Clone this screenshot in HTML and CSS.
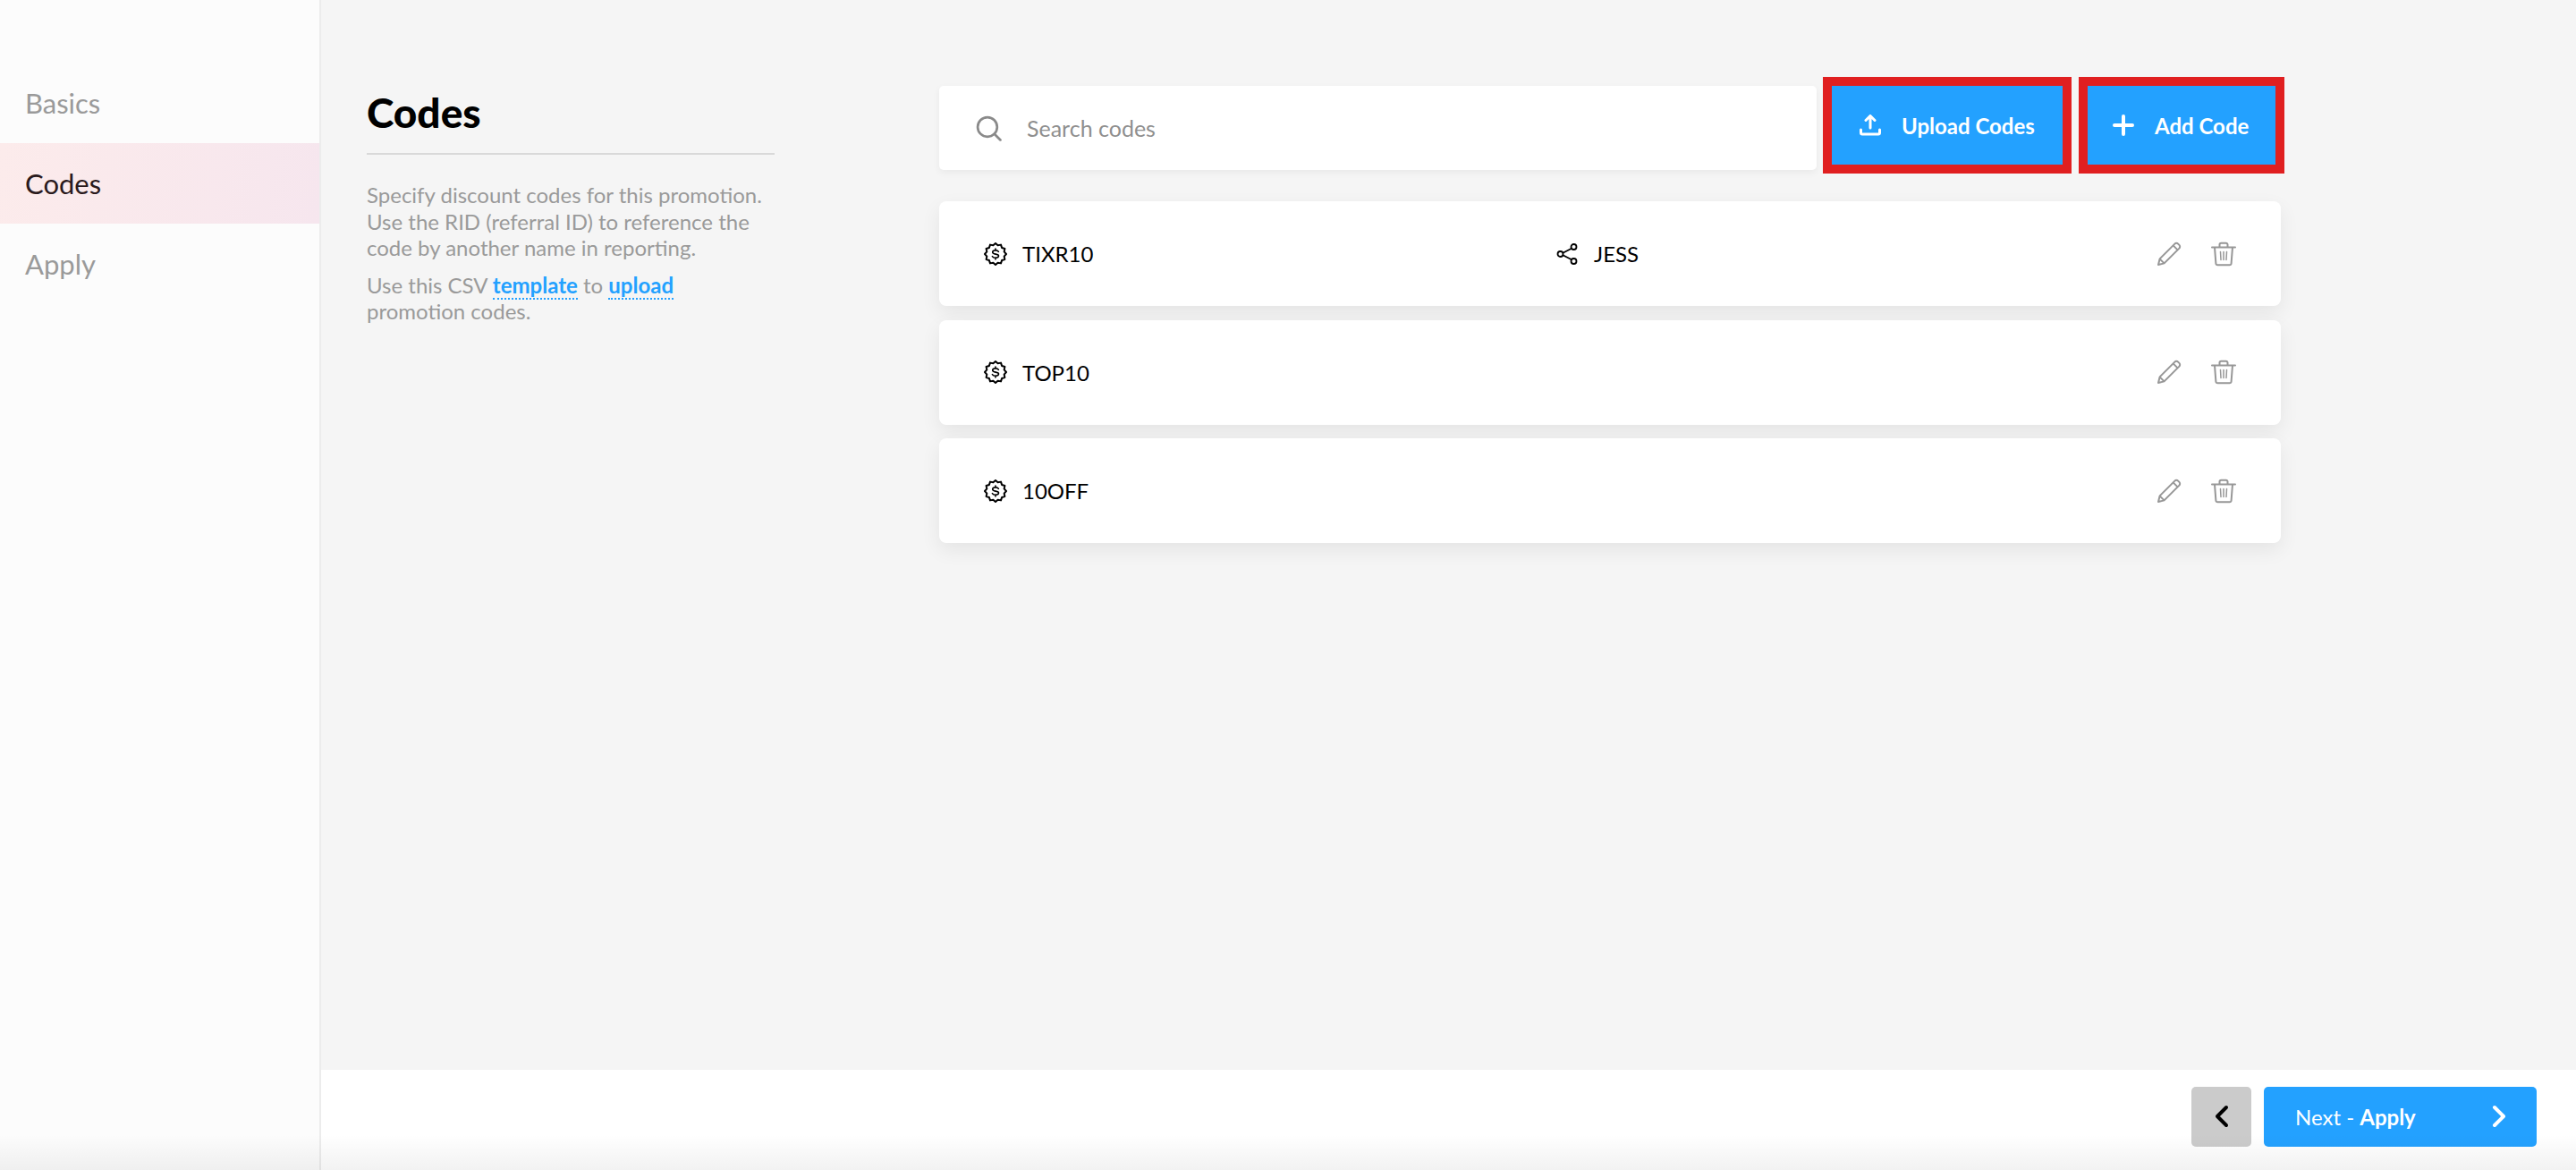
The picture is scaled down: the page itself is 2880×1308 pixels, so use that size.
FILE: index.html
```html
<!DOCTYPE html>
<html lang="en">
<head>
    <meta charset="UTF-8">
    <meta name="viewport" content="width=device-width, initial-scale=1.0">
    <title>Codes</title>
    <link rel="stylesheet" href="styles.css">
</head>
<body>
    <svg class="icon-defs" aria-hidden="true">
        <symbol id="i-badge" viewBox="0 0 26 26">
            <polygon points="25,13 22.66,15.59 23.39,19 20.07,20.07 19,23.39 15.59,22.66 13,25 10.41,22.66 7,23.39 5.93,20.07 2.61,19 3.34,15.59 1,13 3.34,10.41 2.61,7 5.93,5.93 7,2.61 10.41,3.34 13,1 15.59,3.34 19,2.61 20.07,5.93 23.39,7 22.66,10.41" fill="none" stroke="currentColor" stroke-width="2" stroke-linejoin="round"/>
            <path d="M16.4 10.4c-.6-1-1.8-1.5-3.4-1.5-2 0-3.3.9-3.3 2.1 0 2.9 6.8 1.3 6.8 4.1 0 1.2-1.4 2.1-3.5 2.1-1.7 0-3-.6-3.6-1.6M13 7v2M13 17v2" fill="none" stroke="currentColor" stroke-width="1.6" stroke-linecap="round"/>
        </symbol>
        <symbol id="i-pencil" viewBox="0 0 28 28">
            <path d="M2 26l1.6-6.6L20.4 2.6a2.6 2.6 0 0 1 3.7 0l1.3 1.3a2.6 2.6 0 0 1 0 3.7L8.6 24.4zM3.6 19.4l5 5M18.6 4.4l5 5" fill="none" stroke="currentColor" stroke-width="2" stroke-linejoin="round"/>
        </symbol>
        <symbol id="i-trash" viewBox="0 0 28 28">
            <path d="M1 6.5h26M4 6.5l1.4 18a2 2 0 0 0 2 1.8h13.2a2 2 0 0 0 2-1.8l1.4-18M9.5 6V3.6A1.8 1.8 0 0 1 11.300 1.800h5.400a1.800 1.800 0 0 1 1.800 1.800V6" fill="none" stroke="currentColor" stroke-width="2" stroke-linecap="round"/>
            <path d="M10.500 11.500l.5 9M14 11.500v9M17.500 11.500l-.5 9" fill="none" stroke="currentColor" stroke-width="1.500" stroke-linecap="round"/>
        </symbol>
    </svg>

    <div class="app">
        <nav class="sidebar">
            <a class="nav-item">Basics</a>
            <a class="nav-item active">Codes</a>
            <a class="nav-item">Apply</a>
        </nav>

        <div class="main">
            <div class="content">
                <section class="intro">
                    <h1 class="intro-title">Codes</h1>
                    <p>Specify discount codes for this promotion. Use the RID (referral ID) to reference the code by another name in reporting.</p>
                    <p>Use this CSV <a class="inline-link">template</a> to <a class="inline-link">upload</a> promotion codes.</p>
                </section>

                <section class="codes">
                    <div class="toolbar">
                        <div class="search">
                            <svg class="search-icon" viewBox="0 0 28 28"><circle cx="12.500" cy="12.500" r="10.500" fill="none" stroke="currentColor" stroke-width="2.600"/><path d="M20 20l6.500 6.500" fill="none" stroke="currentColor" stroke-width="2.600" stroke-linecap="round"/></svg>
                            <span class="search-text">Search codes</span>
                        </div>
                        <button class="action-button upload-button">
                            <svg class="button-icon" viewBox="0 0 24 24"><path d="M12 15V2M7 6.500L12 1.500l5 5" fill="none" stroke="currentColor" stroke-width="3" stroke-linecap="round" stroke-linejoin="round"/><path d="M1.500 17v3.500a1.500 1.500 0 0 0 1.500 1.500h18a1.500 1.500 0 0 0 1.500-1.500V17" fill="none" stroke="currentColor" stroke-width="3" stroke-linecap="round"/></svg>
                            Upload Codes
                        </button>
                        <button class="action-button add-button">
                            <svg class="button-icon" viewBox="0 0 24 24"><path d="M12 2v20M2 12h20" fill="none" stroke="currentColor" stroke-width="4" stroke-linecap="round"/></svg>
                            Add Code
                        </button>
                    </div>

                    <div class="code-list">
                        <div class="code-row">
                            <div class="code-name"><svg class="code-icon"><use href="#i-badge"/></svg>TIXR10</div>
                            <div class="code-rid">
                                <svg class="rid-icon" viewBox="0 0 26 26"><path d="M20.500 5.500L6 13l14.500 7.500" fill="none" stroke="currentColor" stroke-width="1.800"/><circle cx="20.500" cy="5" r="3" fill="#fff" stroke="currentColor" stroke-width="1.800"/><circle cx="5.500" cy="13" r="3" fill="#fff" stroke="currentColor" stroke-width="1.800"/><circle cx="20.500" cy="21" r="3" fill="#fff" stroke="currentColor" stroke-width="1.800"/></svg>
                                JESS
                            </div>
                            <div class="code-actions"><svg class="row-icon"><use href="#i-pencil"/></svg><svg class="row-icon"><use href="#i-trash"/></svg></div>
                        </div>
                        <div class="code-row">
                            <div class="code-name"><svg class="code-icon"><use href="#i-badge"/></svg>TOP10</div>
                            <div class="code-rid"></div>
                            <div class="code-actions"><svg class="row-icon"><use href="#i-pencil"/></svg><svg class="row-icon"><use href="#i-trash"/></svg></div>
                        </div>
                        <div class="code-row">
                            <div class="code-name"><svg class="code-icon"><use href="#i-badge"/></svg>10OFF</div>
                            <div class="code-rid"></div>
                            <div class="code-actions"><svg class="row-icon"><use href="#i-pencil"/></svg><svg class="row-icon"><use href="#i-trash"/></svg></div>
                        </div>
                    </div>
                </section>
            </div>

            <footer class="footer">
                <button class="back-button">
                    <svg class="chevron" viewBox="0 0 18 26"><path d="M14 3L4 13l10 10" fill="none" stroke="currentColor" stroke-width="4" stroke-linecap="round" stroke-linejoin="round"/></svg>
                </button>
                <button class="next-button">
                    <span>Next - <b>Apply</b></span>
                    <svg class="chevron" viewBox="0 0 18 26"><path d="M4 3l10 10L4 23" fill="none" stroke="currentColor" stroke-width="4" stroke-linecap="round" stroke-linejoin="round"/></svg>
                </button>
            </footer>
        </div>
    </div>
    <div class="bottom-fade"></div>
</body>
</html>
```

FILE: styles.css
```css
* {
    box-sizing: border-box;
}
body {
    margin: 0;
    height: 1308px;
    overflow: hidden;
    font-family: Lato, "Open Sans", sans-serif;
    background-color: #f5f5f5;
    color: #000;
}
button {
    font-family: inherit;
    border: none;
    cursor: pointer;
}
.icon-defs {
    display: none;
}
.app {
    display: flex;
    height: 100%;
}

/* Sidebar */
.sidebar {
    width: 359px;
    flex-shrink: 0;
    padding-top: 70px;
    background-color: #fcfcfc;
    border-right: 2px solid #ececec;
}
.nav-item {
    display: flex;
    align-items: center;
    height: 90px;
    padding-left: 28px;
    font-size: 31px;
    color: #9a9a9a;
}
.nav-item.active {
    background: linear-gradient(100deg, #fcebeb, #f6e6ee);
    color: #2a1a1c;
}

/* Main */
.main {
    flex: 1;
    display: flex;
    flex-direction: column;
}
.content {
    flex: 1;
    display: flex;
    gap: 184px;
    padding: 86px 0 0 51px;
}
.intro {
    width: 456px;
    flex-shrink: 0;
    font-size: 24px;
    line-height: 29.500px;
    color: #9a9a9a;
}
.intro p {
    margin: 0 0 12px 0;
}
.intro-title {
    margin: 0 0 30px 0;
    padding: 8px 0 13px 0;
    border-bottom: 2px solid #d9d9d9;
    font-size: 46px;
    line-height: 64px;
    font-weight: 900;
    color: #000;
}
.inline-link {
    font-weight: 700;
    color: #23a1ff;
    border-bottom: 2px dotted #23a1ff;
}

/* Toolbar */
.codes {
    width: 1504px;
}
.toolbar {
    display: flex;
    align-items: flex-start;
    gap: 7px;
}
.search {
    flex: 1;
    display: flex;
    align-items: center;
    gap: 28px;
    height: 94px;
    margin-top: 10px;
    padding-left: 41px;
    background-color: #fff;
    border-radius: 5px;
    box-shadow: 0 3px 8px rgba(0, 0, 0, 0.05);
}
.search-icon {
    width: 29px;
    height: 29px;
    color: #8a8a8a;
}
.search-text {
    font-size: 25px;
    color: #8f8f8f;
}
.action-button {
    display: flex;
    align-items: center;
    height: 108px;
    padding: 0 0 0 31px;
    gap: 23px;
    background-color: #23a1ff;
    border: 10px solid #e01f20;
    font-size: 24px;
    font-weight: 700;
    color: #fff;
}
.upload-button {
    width: 278px;
}
.add-button {
    width: 230px;
    margin-left: 1px;
    padding-left: 28px;
}
.button-icon {
    width: 24px;
    height: 24px;
}

/* Code rows */
.code-list {
    display: flex;
    flex-direction: column;
    gap: 15.500px;
    width: 1500px;
    margin-top: 31px;
}
.code-row {
    display: grid;
    grid-template-columns: 639px 1fr auto;
    align-items: center;
    height: 117px;
    padding: 0 50px;
    background-color: #fff;
    border-radius: 8px;
    box-shadow: 0 8px 22px rgba(0, 0, 0, 0.07);
    font-size: 24px;
}
.code-name, .code-rid {
    display: flex;
    align-items: center;
}
.code-name {
    gap: 17px;
}
.code-rid {
    gap: 17px;
}
.code-icon {
    width: 26px;
    height: 26px;
}
.rid-icon {
    width: 26px;
    height: 26px;
}
.code-actions {
    display: flex;
    gap: 33px;
    color: #979797;
}
.row-icon {
    width: 28px;
    height: 28px;
}

/* Footer */
.footer {
    display: flex;
    justify-content: flex-end;
    align-items: center;
    gap: 14px;
    height: 112px;
    padding: 0 44px 8px 0;
    background-color: #fff;
}
.back-button {
    width: 67px;
    height: 67px;
    display: flex;
    align-items: center;
    justify-content: center;
    background-color: #cbcbcb;
    border-radius: 5px;
    color: #000;
}
.next-button {
    width: 305px;
    height: 67px;
    display: flex;
    align-items: center;
    justify-content: space-between;
    padding: 0 33px 0 35px;
    background-color: #23a1ff;
    border-radius: 5px;
    font-size: 24px;
    color: #fff;
}
.chevron {
    width: 18px;
    height: 26px;
}
.bottom-fade {
    position: absolute;
    left: 0;
    right: 0;
    bottom: 0;
    height: 40px;
    background: linear-gradient(rgba(0, 0, 0, 0), rgba(0, 0, 0, 0.05));
    pointer-events: none;
}
```
